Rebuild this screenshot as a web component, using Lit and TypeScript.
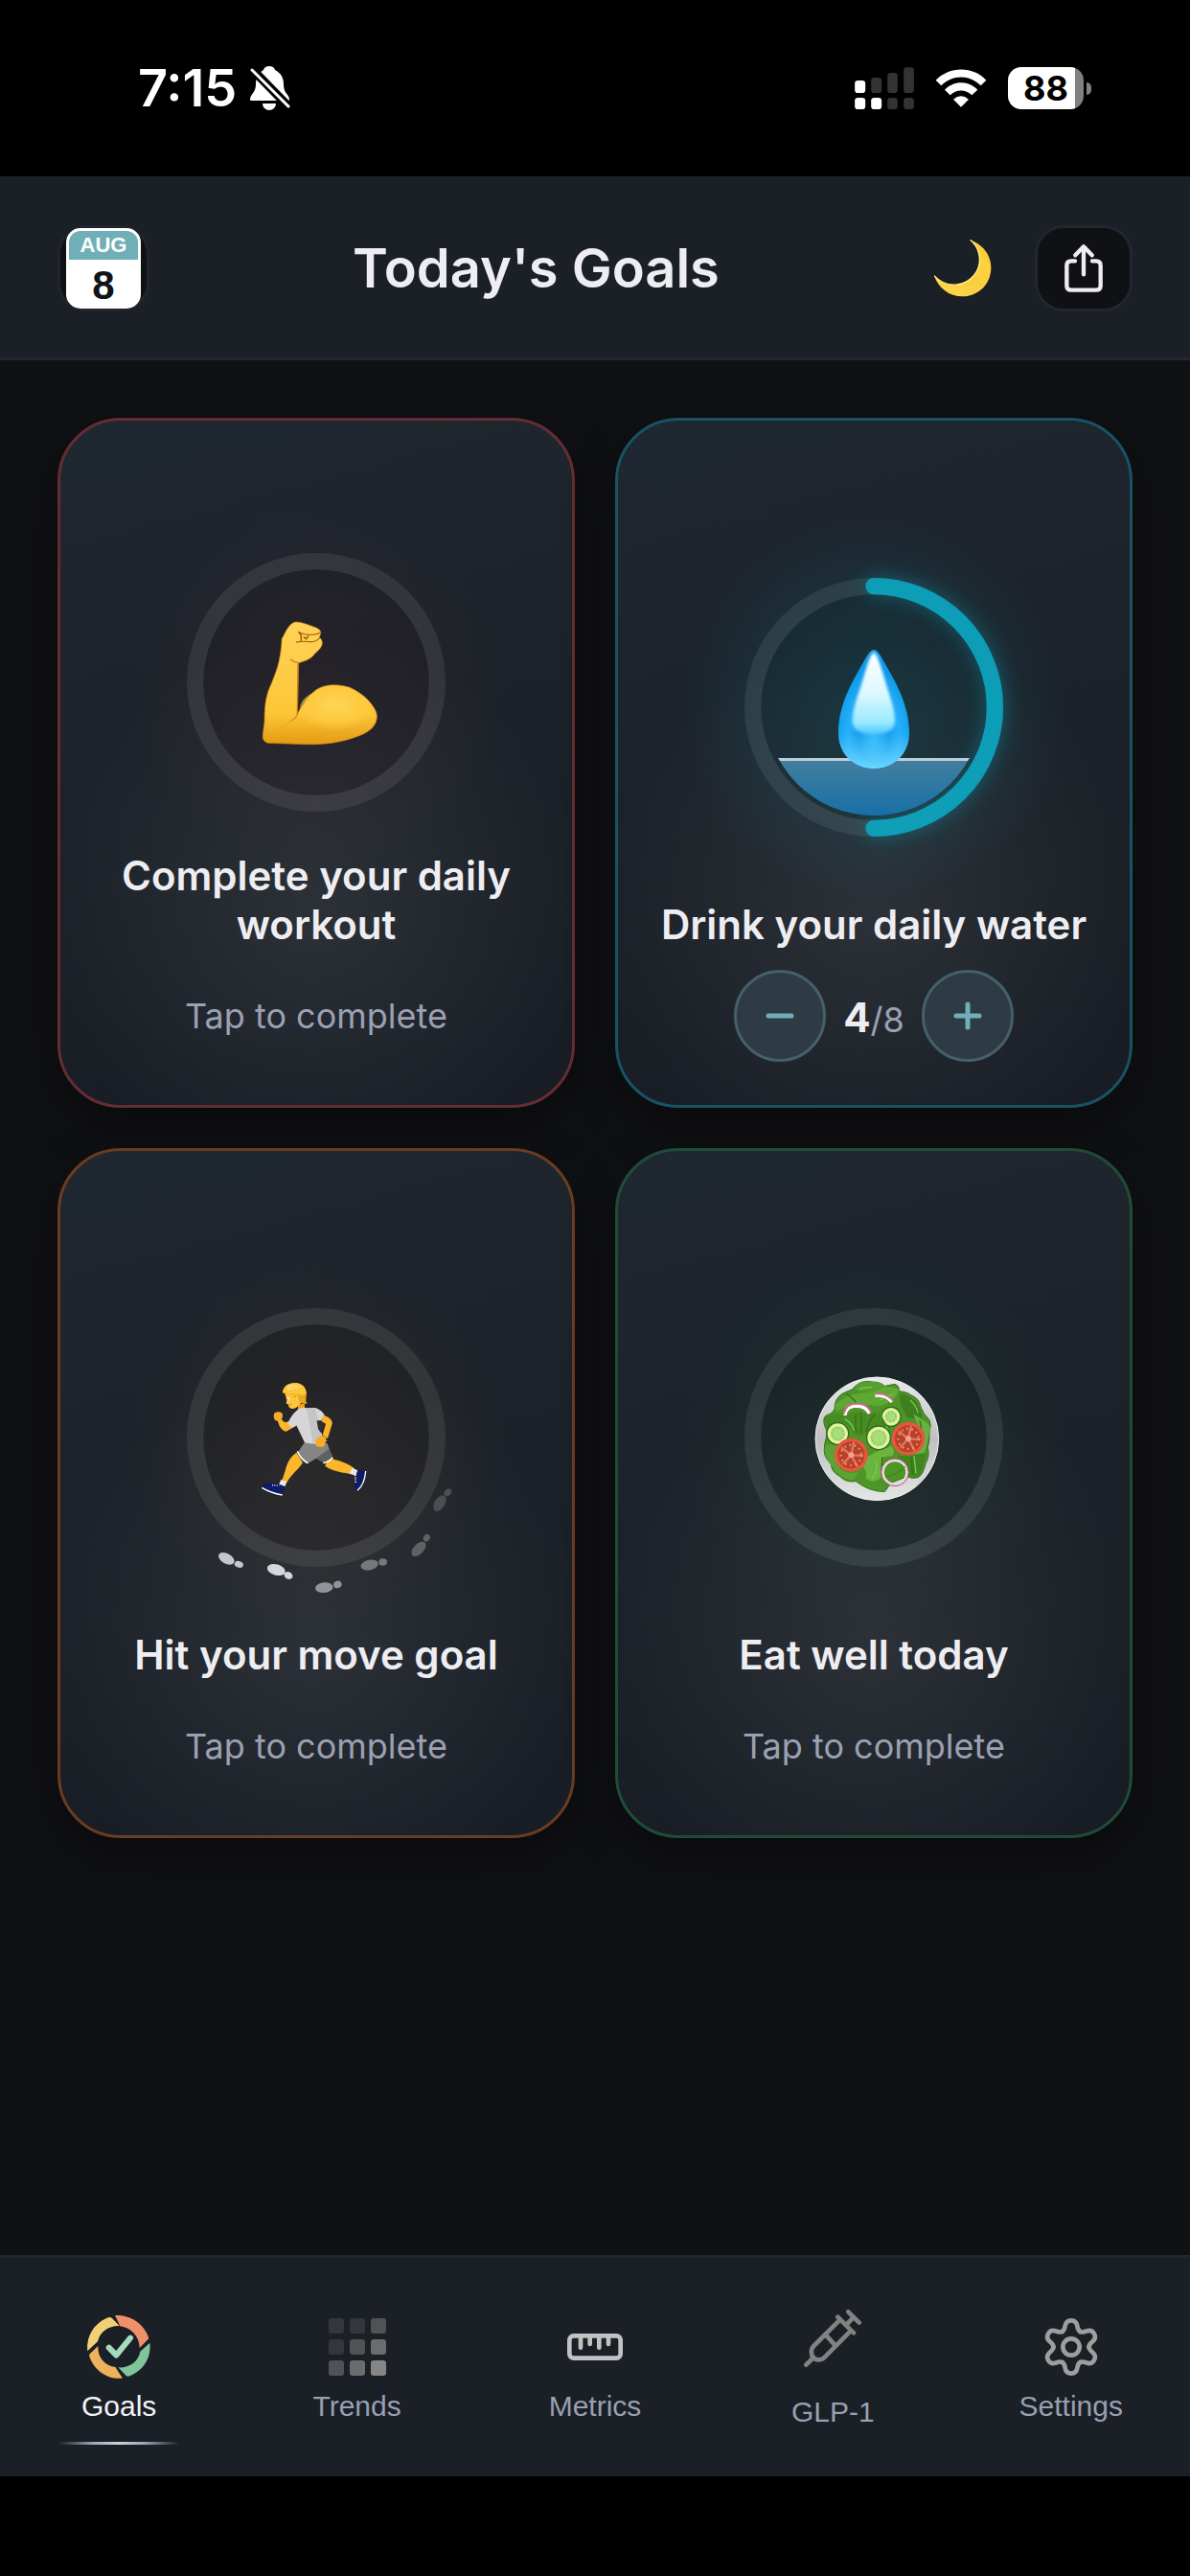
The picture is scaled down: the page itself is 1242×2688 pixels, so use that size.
import { LitElement, css, html, nothing, svg } from "lit";
import type { SVGTemplateResult, TemplateResult } from "lit";
import { customElement, state } from "lit/decorators.js";
import { classMap } from "lit/directives/class-map.js";

type Goal = {
  id: string;
  title: string;
  color: string;
  art: SVGTemplateResult;
};

type NavItem = {
  id: string;
  label: string;
  icon: TemplateResult;
};

const RING_RADIUS = 379;
const RING_LENGTH = 2 * Math.PI * RING_RADIUS;

const bicepsArt = svg`
  <defs>
    <linearGradient id="arm" x1="0" y1="0" x2="0" y2="1">
      <stop offset="0" stop-color="#ffd257" />
      <stop offset="0.75" stop-color="#fdc637" />
      <stop offset="1" stop-color="#e39a13" />
    </linearGradient>
    <radialGradient id="upper-arm" cx="0.5" cy="0.4" r="0.6">
      <stop offset="0" stop-color="#ffd556" />
      <stop offset="0.6" stop-color="#fdca40" />
      <stop offset="1" stop-color="#fdca40" stop-opacity="0" />
    </radialGradient>
  </defs>
  <g transform="translate(135 129)">
    <path
      d="M206 87C225 87 250 98 270 105Q286 112 284 122L280 136Q290 142 289 156C284 175 268 181 262 191C250 205 230 211 215 215L211 375C230 340 255 310 270 299C300 280 340 281 375 292C420 312 455 350 460 378C462 410 440 430 405 443C350 465 290 472 235 470L118 466Q100 460 103 440L108 400C108 340 115 310 130 280C145 240 156 220 162 150Q160 140 168 130C180 105 190 90 206 87Z"
      fill="url(#arm)" stroke="#c98512" stroke-width="2"
    />
    <ellipse cx="330" cy="360" rx="112" ry="66" fill="url(#upper-arm)" />
    <path d="M213 217L211 377Q206 390 186 399" fill="none" stroke="#c47a10" stroke-width="4" stroke-linecap="round" />
    <path d="M211 377C190 402 160 420 128 434" fill="none" stroke="#f0ae27" stroke-width="4" />
    <path d="M189 203Q200 214 216 214" fill="none" stroke="#d08c18" stroke-width="4" />
    <path d="M215 119Q232 128 252 127T281 121M281 137Q268 151 248 149T208 150" fill="none" stroke="#b06f10" stroke-width="4" stroke-linecap="round" />
    <path d="M217 120Q227 132 222 146M232 134L239 140L245 132" fill="none" stroke="#8e5208" stroke-width="4" stroke-linecap="round" />
  </g>
`;

const runnerArt = svg`
  <g transform="translate(-45 -78)">
    <path d="M486 548L478 572C500 590 535 592 562 598L570 580C545 560 520 556 498 550Z" fill="#fbb62a" />
    <path d="M388 530C362 548 358 570 352 590L342 620L358 624C372 598 398 580 408 562Z" fill="#fbb62a" />
    <path d="M388 412L368 432L352 436L338 424L330 432C334 450 345 464 356 464L388 446Z" fill="#fbb62a" />
    <path d="M318 410C318 402 334 400 342 406C348 414 344 426 338 430C328 434 314 430 318 410Z" fill="#f9ac25" />
    <path d="M392 380L394 400L414 396L414 376Z" fill="#f0a020" />
    <path d="M350 338L358 366L356 377L362 379L365 388C370 394 378 394 388 389L402 376L404 336Z" fill="#ffc53a" />
    <path d="M345 344C346 322 364 312 384 312C408 313 421 330 419 350L418 370L422 378L398 374L390 346L384 362L378 348Q360 352 350 343Z" fill="#e9a823" />
    <path d="M345 344C346 322 364 312 384 312C408 313 421 330 419 348Q400 352 390 346L384 350L378 346Q360 350 350 343Z" fill="#fdc73c" />
    <path d="M358 322Q380 310 404 326Q385 330 362 336Z" fill="#ffd766" />
    <ellipse cx="363" cy="363" rx="4" ry="5" fill="#ffffff" />
    <circle cx="362" cy="364" r="2" fill="#4b78b4" />
    <path d="M366 381L373 378" stroke="#9c5a10" stroke-width="2" />
    <path d="M414 498L396 524L392 534L424 564L450 548L474 562L502 546L484 500Z" fill="#858585" />
    <path d="M450 548L474 562L502 546L490 518Z" fill="#616161" />
    <path d="M391 526C398 542 410 556 424 563M472 563Q490 560 502 546" fill="none" stroke="#ffffff" stroke-width="5" />
    <path d="M388 400C398 389 412 388 420 391L446 390C462 394 474 406 476 414L466 430L452 430L470 480L484 494Q450 508 414 499L388 445L372 452L361 438C370 420 378 408 388 400Z" fill="#d6d6d8" />
    <path d="M420 392L446 390L454 420L470 480L440 500Z" fill="#c5c5c8" />
    <path d="M474 414L466 432L480 440L470 476L486 486L500 440C502 428 488 418 474 414Z" fill="#fbb428" />
    <path d="M466 478C452 482 446 494 448 506Q456 516 474 511C480 502 480 488 482 482Z" fill="#f9ac25" />
    <path d="M452 430L456 456L466 470L474 444L464 432Z" fill="#322c2b" />
    <path d="M340 615L358 622L352 637L332 633Z" fill="#e8e8e8" />
    <path d="M562 578L580 586L574 602L554 596Z" fill="#e8e8e8" />
    <path d="M282 630Q300 624 330 628L354 637L344 664Q310 662 280 642Z" fill="#101b66" />
    <path d="M280 640Q306 656 344 663" fill="none" stroke="#ffffff" stroke-width="4" />
    <path d="M312 632L334 634" stroke="#ffffff" stroke-width="4" stroke-dasharray="3 4" />
    <path d="M580 584L606 588Q604 630 580 650L570 646Q568 620 576 604Z" fill="#101b66" />
    <path d="M605 588Q602 630 579 649" fill="none" stroke="#ffffff" stroke-width="4" />
    <path d="M572 600L574 626" stroke="#ffffff" stroke-width="5" stroke-dasharray="3 4" />
    <g fill="#c6c7cd">
      <ellipse cx="169" cy="862" rx="27" ry="16" transform="rotate(30 169 862)" />
      <ellipse cx="208" cy="880" rx="14" ry="10" transform="rotate(18 208 880)" />
    </g>
    <g fill="#d6d7dc">
      <ellipse cx="325" cy="897" rx="29" ry="17" transform="rotate(16 325 897)" />
      <ellipse cx="363" cy="915" rx="14" ry="11" transform="rotate(28 363 915)" />
    </g>
    <g fill="#929398">
      <ellipse cx="475" cy="953" rx="28" ry="16" transform="rotate(-6 475 953)" />
      <ellipse cx="517" cy="943" rx="13" ry="11" transform="rotate(-14 517 943)" />
    </g>
    <g fill="#77787c">
      <ellipse cx="617" cy="882" rx="28" ry="16" transform="rotate(-12 617 882)" />
      <ellipse cx="659" cy="873" rx="13" ry="11" />
    </g>
    <g fill="#606165">
      <ellipse cx="771" cy="832" rx="28" ry="16" transform="rotate(-46 771 832)" />
      <ellipse cx="796" cy="797" rx="12" ry="10" transform="rotate(-60 796 797)" />
    </g>
    <g fill="#4c4e52">
      <ellipse cx="837" cy="689" rx="28" ry="16" transform="rotate(-58 837 689)" />
      <ellipse cx="862" cy="655" rx="13" ry="10" transform="rotate(-48 862 655)" />
    </g>
  </g>
`;

const tomato = (x: number, y: number) => svg`
  <g transform="translate(${x} ${y})">
    <circle r="52" fill="#e9553f" />
    <circle r="42" fill="#b8402f" />
    <path d="M0 0L-28 -22M0 0L8 -38M0 0L36 2M0 0L18 34M0 0L-24 26" stroke="#e2765c" stroke-width="7" stroke-linecap="round" />
    <circle r="32" fill="none" stroke="#e3ad4c" stroke-width="6" stroke-dasharray="5 11" />
    <circle r="9" fill="#f5a184" />
  </g>
`;

const cucumber = (x: number, y: number, r: number) => svg`
  <circle cx=${x} cy=${y} r=${r} fill="#2f6a1c" />
  <circle cx=${x} cy=${y} r=${r - 4} fill="#e3f3a0" />
  <circle cx=${x} cy=${y} r=${r - 13} fill="#a9dd77" />
  <circle cx=${x} cy=${y} r=${r - 18} fill="none" stroke="#7dc05a" stroke-width="4" stroke-dasharray="4 7" />
`;

const saladArt = svg`
  <defs>
    <linearGradient id="plate" x1="0" y1="0" x2="0" y2="1">
      <stop offset="0" stop-color="#e9e9eb" />
      <stop offset="0.5" stop-color="#bfc1c1" />
      <stop offset="1" stop-color="#e4e5e5" />
    </linearGradient>
  </defs>
  <g transform="translate(-81 -78)">
    <circle cx="496" cy="487" r="193" fill="url(#plate)" stroke="#f2f2f3" stroke-width="3" />
    <path
      d="M428 322Q450 302 480 309Q505 308 520 322L552 316Q568 322 564 338Q590 340 602 350Q630 362 632 385Q640 410 660 428Q668 445 660 465Q662 490 655 515Q662 540 648 565Q640 600 625 608Q605 614 590 605L540 625L520 653Q470 652 430 620Q400 625 380 605Q352 590 352 565Q325 545 332 505Q340 480 338 460Q322 430 335 415Q368 405 364 380Q370 350 400 340Q420 335 428 322Z"
      fill="#4e9427" stroke="#3b6f1f" stroke-width="3"
    />
    <path d="M364 380Q400 350 440 345Q500 340 520 322L564 330Q560 370 500 385Q430 370 370 402Z" fill="#5fa834" />
    <path d="M428 322Q450 302 480 309Q505 308 520 322Q480 345 428 336Z" fill="#579f30" />
    <path d="M332 420Q370 400 400 415Q430 395 450 408Q500 398 530 420Q545 450 535 480L470 470Q430 490 415 460L400 440Q360 445 338 455Z" fill="#478c23" />
    <path d="M566 345Q600 350 618 370Q640 400 636 430L590 420L570 380Z" fill="#3f7f20" />
    <path d="M610 410Q650 430 664 450Q655 500 640 545L600 530L640 490Z" fill="#67b043" />
    <path d="M333 510Q350 500 370 510L380 580Q400 600 438 590L420 618Q380 612 356 575Q328 545 333 510Z" fill="#5aa334" />
    <path d="M440 560Q480 530 540 510Q555 520 545 540L510 545L508 610Q480 630 460 610Q470 590 440 560Z" fill="#6bb53f" />
    <path d="M430 612Q480 640 518 630L520 653Q470 650 430 612Z" fill="#4a9a26" />
    <path d="M560 540Q600 540 650 530Q640 580 630 602Q600 610 592 598Z" fill="#3f8620" />
    <path d="M430 410Q425 440 432 468M445 402Q450 440 445 470M490 408Q470 430 462 465M512 545L510 600M603 545L608 600M630 500Q640 470 630 430M400 345Q420 360 430 372" fill="none" stroke="#33701a" stroke-width="4" />
    <path d="M395 425Q420 440 424 462M550 345L505 365M520 420Q530 445 525 465M480 612Q495 600 496 560M612 540L618 595M600 366Q620 385 624 405M480 325L440 330" fill="none" stroke="#7cc655" stroke-width="4" />
    <path d="M396 414Q398 384 434 384Q462 386 472 408" fill="none" stroke="#ffffff" stroke-width="10" />
    <path d="M392 410Q398 377 434 377Q468 378 477 404" fill="none" stroke="#d7659c" stroke-width="5" />
    <path d="M490 352Q522 346 543 372" fill="none" stroke="#ffffff" stroke-width="10" />
    <path d="M490 347Q526 342 547 370" fill="none" stroke="#d7659c" stroke-width="5" />
    ${cucumber(540, 418, 32)}
    <path d="M500 420Q520 400 516 388L508 400Q512 430 536 450Z" fill="#478c23" />
    ${cucumber(373, 471, 36)}
    ${cucumber(501, 484, 39)}
    ${tomato(415, 538)}
    ${tomato(594, 487)}
    <circle cx="552" cy="592" r="38" fill="none" stroke="#dfe2da" stroke-width="9" />
    <circle cx="552" cy="592" r="43" fill="none" stroke="#b9487c" stroke-width="3" />
    <path d="M524 606Q560 600 584 574" fill="none" stroke="#3f8620" stroke-width="4" />
  </g>
`;

const DROP_PATH =
  "M405 225C416 225 426 242 440 268C470 322 516 395 516 486C516 552 466 597 405 597C344 597 294 552 294 486C294 395 340 322 370 268C384 242 394 225 405 225Z";

const waterArt = svg`
  <defs>
    <clipPath id="basin"><circle cx="405" cy="405" r="339" /></clipPath>
    <linearGradient id="water" x1="0" y1="0" x2="0" y2="1">
      <stop offset="0" stop-color="#447f9e" />
      <stop offset="0.72" stop-color="#1870a6" />
    </linearGradient>
    <radialGradient id="drop" cx="0.5" cy="0.75" r="0.6">
      <stop offset="0" stop-color="#31b9ff" />
      <stop offset="0.35" stop-color="#149feb" />
      <stop offset="0.6" stop-color="#26b0fb" />
      <stop offset="1" stop-color="#0d98e8" />
    </radialGradient>
    <linearGradient id="shine" x1="0" y1="0" x2="0" y2="1">
      <stop offset="0" stop-color="#ffffff" />
      <stop offset="0.5" stop-color="#dcf8ff" />
      <stop offset="0.85" stop-color="#98eaff" />
      <stop offset="1" stop-color="#4cc6ff" />
    </linearGradient>
    <linearGradient id="rim" x1="0" y1="0" x2="0" y2="1">
      <stop offset="0.7" stop-color="#6ad0ff" stop-opacity="0" />
      <stop offset="1" stop-color="#6ad8ff" />
    </linearGradient>
    <filter id="soft"><feGaussianBlur stdDeviation="4" /></filter>
  </defs>
  <g clip-path="url(#basin)">
    <rect x="0" y="564" width="810" height="246" fill="url(#water)" />
    <rect x="0" y="564" width="810" height="9" fill="#b9cfda" />
  </g>
  <path d=${DROP_PATH} fill="url(#drop)" />
  <path d=${DROP_PATH} fill="url(#rim)" />
  <path d="M405 234C414 236 422 262 434 300C450 360 471 405 471 448C471 480 440 490 405 490C368 490 338 480 338 448C338 405 360 360 376 300C388 262 396 236 405 234Z" fill="url(#shine)" filter="url(#soft)" />
`;

const GOALS: Goal[] = [
  { id: "workout", title: "Complete your daily workout", color: "#ef4444", art: bicepsArt },
  { id: "water", title: "Drink your daily water", color: "#06b6d4", art: waterArt },
  { id: "move", title: "Hit your move goal", color: "#f97316", art: runnerArt },
  { id: "food", title: "Eat well today", color: "#22c55e", art: saladArt },
];

const TREND_SHADES = [
  ["#33363d", "#33363d", "#515255"],
  ["#33363d", "#515255", "#6b6c6e"],
  ["#515255", "#6b6c6e", "#868686"],
];

const NAV: NavItem[] = [
  {
    id: "goals",
    label: "Goals",
    icon: html`
      <svg class="nav-icon" viewBox="30 33 198 198" aria-hidden="true">
        <path d="M117 33C166 30 207 60 222 101Q223 106 220 109L194 135C194 100 168 72 133 67Z" fill="#f0906a" />
        <path d="M226 119C232 165 205 208 160 224Q155 225 152 222L127 196C162 198 190 178 196 146Z" fill="#80c49b" />
        <path d="M141 230C92 235 52 205 37 162Q36 157 38 154L64 129C62 163 84 190 118 195Z" fill="#eeb15c" />
        <path d="M31 145C26 98 53 55 98 39Q103 38 107 41L131 66C97 65 70 84 63 115Z" fill="#f3d074" />
        <path d="M98 134L121 158L165 104" fill="none" stroke="#a6dabf" stroke-width="18" stroke-linecap="round" stroke-linejoin="round" />
      </svg>
    `,
  },
  {
    id: "trends",
    label: "Trends",
    icon: html`
      <svg class="nav-icon" viewBox="-3 -3 66 66" aria-hidden="true">
        ${TREND_SHADES.map((row, y) =>
          row.map((fill, x) => svg`<rect x=${x * 22} y=${y * 22} width="16" height="16" rx="3" fill=${fill} />`),
        )}
      </svg>
    `,
  },
  {
    id: "metrics",
    label: "Metrics",
    icon: html`
      <svg class="nav-icon" viewBox="24 48 198 198" aria-hidden="true">
        <g fill="none" stroke="#c2c2c2" stroke-width="14" stroke-linecap="round">
          <rect x="43" y="112" width="160" height="70" rx="13" />
          <path d="M78 114V149M107 114V138M136 114V149M165 114V138" />
        </g>
      </svg>
    `,
  },
  {
    id: "glp",
    label: "GLP-1",
    icon: html`
      <svg class="nav-icon tall" viewBox="771 30 198 234" aria-hidden="true">
        <g fill="none" stroke="#828282" stroke-width="14" stroke-linecap="round" stroke-linejoin="round">
          <path d="M919 37L953 71M936 54L912 78M886 53L936 103M787 203L810 180M849 110L876 140" />
          <path d="M893 62L811 144C802 153 802 164 806 176C814 190 834 190 843 181L926 97" />
        </g>
      </svg>
    `,
  },
  {
    id: "settings",
    label: "Settings",
    icon: html`
      <svg class="nav-icon" viewBox="-99 -99 198 198" aria-hidden="true">
        <g fill="none" stroke="#9e9e9e" stroke-width="14" stroke-linecap="round">
          <circle r="26" />
          ${[0, 60, 120, 180, 240, 300].map(
            (angle) => svg`<path
              transform="rotate(${angle})"
              d="M-28 -48C-22 -52 -20 -58 -19 -66Q-16 -83 0 -83Q16 -83 19 -66C20 -58 22 -52 28 -48"
            />`,
          )}
        </g>
      </svg>
    `,
  },
];

@customElement("app-root")
export class AppRoot extends LitElement {
  static styles = css`
    :host {
      display: flex;
      flex-direction: column;
      min-height: 100vh;
      background: #000000;
      color: #eeeef2;
      font-family: Inter, "Liberation Sans", sans-serif;
    }

    button {
      margin: 0;
      padding: 0;
      border: 0;
      background: none;
      color: inherit;
      font: inherit;
      cursor: pointer;
    }

    svg {
      display: block;
    }

    .status {
      display: flex;
      align-items: center;
      justify-content: space-between;
      box-sizing: border-box;
      height: 184px;
      padding: 0 103px 0 144px;
      color: #ffffff;
    }

    .clock,
    .indicators {
      display: flex;
      align-items: center;
    }

    .clock {
      gap: 14px;
      font-size: 54px;
      font-weight: 600;
      line-height: 60px;
    }

    .indicators {
      gap: 22px;
    }

    .bell {
      width: 42px;
      height: 46px;
    }

    .signal {
      width: 62px;
      height: 44px;
    }

    .wifi {
      width: 54px;
      height: 40px;
    }

    .battery {
      display: flex;
      align-items: center;
      gap: 3px;
    }

    .battery-level {
      width: 79px;
      border-radius: 14px;
      background: linear-gradient(90deg, #ffffff 88%, #808080 88%);
      color: #000000;
      font-size: 36px;
      font-weight: 700;
      line-height: 44px;
      text-align: center;
    }

    .battery-tip {
      width: 5px;
      height: 13px;
      border-radius: 0 6px 6px 0;
      background: #808080;
    }

    .header {
      display: flex;
      align-items: center;
      justify-content: space-between;
      padding: 51px 60px 48px;
      border-bottom: 3px solid #22272f;
      background: #1b1f26;
    }

    .title {
      margin: 0;
      font-size: 56px;
      font-weight: 600;
      line-height: 68px;
    }

    .actions {
      display: flex;
      align-items: center;
      gap: 33px;
    }

    .date {
      display: flex;
      justify-content: center;
      width: 96px;
      border: 3px solid #20252c;
      border-radius: 30px;
      box-sizing: border-box;
      background: #101114;
    }

    .page {
      display: flex;
      flex-direction: column;
      width: 78px;
      height: 84px;
      box-sizing: border-box;
      padding: 3px;
      border-radius: 15px;
      background: #ffffff;
      font-family: "Liberation Sans", Arial, sans-serif;
      font-weight: 700;
      text-align: center;
    }

    .month {
      border-radius: 12px 12px 0 0;
      background: #71afb8;
      color: #ffffff;
      font-size: 22px;
      line-height: 30px;
    }

    .day {
      color: #101418;
      font-size: 42px;
      line-height: 54px;
    }

    .theme {
      display: flex;
      justify-content: center;
      width: 84px;
    }

    .moon {
      width: 60px;
      height: 60px;
    }

    .share {
      display: flex;
      align-items: center;
      justify-content: center;
      width: 102px;
      height: 90px;
      box-sizing: border-box;
      border: 3px solid #22272f;
      border-radius: 30px;
      background: #101114;
    }

    .share-icon {
      width: 40px;
      height: 50px;
    }

    .goals {
      display: grid;
      flex: 1;
      grid-template-columns: repeat(2, minmax(0, 1fr));
      align-content: start;
      gap: 42px;
      padding: 60px;
      background: #101114;
    }

    .card {
      display: flex;
      flex-direction: column;
      align-items: center;
      min-height: 720px;
      box-sizing: border-box;
      padding: 115px 30px 45px;
      border: 3px solid;
      border-radius: 66px;
      background:
        radial-gradient(circle at 50% 72%, rgba(255, 255, 255, 0.08), transparent 50%),
        linear-gradient(165deg, #1f2730 0%, #1c2229 45%, #181c24 100%);
      box-shadow: 0 18px 48px rgba(0, 0, 0, 0.4);
      text-align: center;
    }

    .workout {
      border-color: #662c33;
    }

    .water {
      border-color: #175364;
    }

    .move {
      border-color: #6a3c20;
    }

    .food {
      border-color: #1f4c37;
    }

    .ring-area {
      display: flex;
      flex: 1;
      align-items: center;
    }

    .ring {
      width: 270px;
      height: 270px;
      overflow: visible;
    }

    .arc {
      filter: drop-shadow(0 0 30px rgba(6, 182, 212, 0.5));
    }

    .card-title {
      margin: 18px 0 22px;
      font-size: 42px;
      font-weight: 600;
      line-height: 51px;
    }

    .card-foot {
      display: flex;
      align-items: center;
      gap: 18px;
      min-height: 96px;
      color: #9aa1b2;
      font-size: 36px;
      line-height: 44px;
    }

    .count {
      padding-top: 6px;
    }

    .count strong {
      color: #eeeef2;
      font-size: 42px;
      font-weight: 700;
    }

    .step {
      display: flex;
      align-items: center;
      justify-content: center;
      width: 96px;
      height: 96px;
      box-sizing: border-box;
      border: 3px solid #45606a;
      border-radius: 50%;
      background: #2e3b44;
    }

    .step-icon {
      width: 30px;
      height: 30px;
    }

    .nav {
      display: grid;
      grid-template-columns: repeat(5, minmax(0, 1fr));
      margin-bottom: 104px;
      padding: 54px 0 27px;
      border-top: 3px solid #22272f;
      background: #1b1f26;
    }

    .nav-item {
      display: flex;
      flex-direction: column;
      align-items: center;
      justify-content: center;
      color: #98a0b1;
      font-family: "Liberation Sans", Arial, sans-serif;
      font-size: 30px;
      line-height: 34px;
      text-decoration: none;
    }

    .nav-item.active {
      color: #f2f3f5;
    }

    .nav-icon {
      width: 66px;
      height: 66px;
      margin-bottom: 12px;
    }

    .nav-icon.tall {
      height: 78px;
    }

    .underline {
      width: 126px;
      height: 3px;
      margin-top: 20px;
    }

    .active .underline {
      background: linear-gradient(90deg, transparent, #9aa1b2 28%, #cdd2dd 50%, #9aa1b2 72%, transparent);
    }
  `;

  @state() private tab = "goals";
  @state() private cups = 4;
  @state() private done: string[] = [];

  private readonly cupGoal = 8;

  private changeCups(step: number) {
    this.cups = Math.min(this.cupGoal, Math.max(0, this.cups + step));
  }

  private toggle(id: string) {
    this.done = this.done.includes(id) ? this.done.filter((item) => item !== id) : [...this.done, id];
  }

  private progress(goal: Goal) {
    if (goal.id === "water") {
      return this.cups / this.cupGoal;
    }
    return this.done.includes(goal.id) ? 1 : 0;
  }

  private renderRing(goal: Goal) {
    const progress = this.progress(goal);
    const strength = progress > 0 ? 0.16 : 0.06;
    return html`
      <div class="ring-area">
        <svg class="ring" viewBox="0 0 810 810" aria-hidden="true">
          <defs>
            <radialGradient id="glow-${goal.id}">
              <stop offset="0" stop-color=${goal.color} stop-opacity=${strength} />
              <stop offset="0.6" stop-color=${goal.color} stop-opacity=${strength / 2} />
              <stop offset="1" stop-color=${goal.color} stop-opacity="0" />
            </radialGradient>
          </defs>
          <circle cx="405" cy="405" r="600" fill="url(#glow-${goal.id})" />
          <circle cx="405" cy="405" r="353" fill="#000000" fill-opacity="0.08" />
          <circle cx="405" cy="405" r=${RING_RADIUS} fill="none" stroke="#ffffff" stroke-opacity="0.08" stroke-width="52" />
          ${progress > 0
            ? svg`<circle
                class="arc"
                cx="405" cy="405" r=${RING_RADIUS}
                fill="none" stroke=${goal.color} stroke-opacity="0.74" stroke-width="52" stroke-linecap="round"
                stroke-dasharray="${RING_LENGTH * progress} ${RING_LENGTH}"
                transform="rotate(-90 405 405)"
              />`
            : nothing}
          ${goal.art}
        </svg>
      </div>
    `;
  }

  private renderGoal(goal: Goal) {
    if (goal.id === "water") {
      return html`
        <article class="card water">
          ${this.renderRing(goal)}
          <h2 class="card-title">${goal.title}</h2>
          <div class="card-foot">
            <button class="step" type="button" aria-label="Remove a glass" @click=${() => this.changeCups(-1)}>
              <svg class="step-icon" viewBox="0 0 30 30" aria-hidden="true">
                <path d="M3 15H27" stroke="#71afb8" stroke-width="5" stroke-linecap="round" />
              </svg>
            </button>
            <span class="count"><strong>${this.cups}</strong>/${this.cupGoal}</span>
            <button class="step" type="button" aria-label="Add a glass" @click=${() => this.changeCups(1)}>
              <svg class="step-icon" viewBox="0 0 30 30" aria-hidden="true">
                <path d="M3 15H27M15 3V27" stroke="#71afb8" stroke-width="5" stroke-linecap="round" />
              </svg>
            </button>
          </div>
        </article>
      `;
    }
    return html`
      <button class="card ${goal.id}" type="button" @click=${() => this.toggle(goal.id)}>
        ${this.renderRing(goal)}
        <span class="card-title">${goal.title}</span>
        <span class="card-foot">${this.done.includes(goal.id) ? "Completed" : "Tap to complete"}</span>
      </button>
    `;
  }

  private renderStatus() {
    return html`
      <div class="status">
        <div class="clock">
          <span>7:15</span>
          <svg class="bell" viewBox="0 0 42 46" aria-hidden="true">
            <path
              fill="#ffffff"
              d="M20 0c3 0 5 1 6 4 6 3 9 8 9 15 0 10 6 10 6 16q0 1-1 1H1q-1 0-1-1c0-6 6-7 6-16 0-7 3-12 8-15 1-3 3-4 6-4zM13 39h14a7 7 0 0 1-14 0z"
            />
            <path d="M1 2L41 43" stroke="#000000" stroke-width="9" />
            <path d="M2 4L40 42" stroke="#ffffff" stroke-width="3" stroke-linecap="round" />
          </svg>
        </div>
        <div class="indicators">
          <svg class="signal" viewBox="213 120 185 132" aria-hidden="true">
            <g fill="#ffffff">
              <rect x="213" y="162" width="33" height="39" rx="10" />
              <rect x="213" y="216" width="33" height="36" rx="10" />
              <rect x="264" y="216" width="33" height="36" rx="10" />
            </g>
            <g fill="#333333">
              <rect x="264" y="153" width="33" height="48" rx="10" />
              <rect x="315" y="138" width="32" height="63" rx="10" />
              <rect x="366" y="121" width="32" height="80" rx="10" />
              <rect x="315" y="216" width="32" height="36" rx="10" />
              <rect x="366" y="216" width="32" height="36" rx="10" />
            </g>
          </svg>
          <svg class="wifi" viewBox="466 125 162 120" aria-hidden="true">
            <path
              fill="#ffffff"
              d="M468 160C512 115 582 115 626 160L609 177C574 142 520 142 485 177ZM496 190C523 160 571 160 599 190L581 207C562 188 532 188 513 207ZM523 220Q547 200 571 220L547 244Z"
            />
          </svg>
          <div class="battery">
            <div class="battery-level">88</div>
            <div class="battery-tip"></div>
          </div>
        </div>
      </div>
    `;
  }

  private renderHeader() {
    return html`
      <header class="header">
        <button class="date" type="button" aria-label="Choose a date">
          <span class="page">
            <span class="month">AUG</span>
            <span class="day">8</span>
          </span>
        </button>
        <h1 class="title">Today's Goals</h1>
        <div class="actions">
          <button class="theme" type="button" aria-label="Switch theme">
            <svg class="moon" viewBox="466 655 180 180" aria-hidden="true">
              <defs>
                <linearGradient id="moonlight" x1="0" y1="1" x2="1" y2="0">
                  <stop offset="0" stop-color="#ffd84a" />
                  <stop offset="0.5" stop-color="#f9cf3e" />
                  <stop offset="0.75" stop-color="#ffd23c" />
                  <stop offset="1" stop-color="#f2c13a" />
                </linearGradient>
              </defs>
              <path
                fill="url(#moonlight)"
                d="M579 656C622 672 645 707 644 745C643 798 601 833 555 833C513 833 479 806 466 768C486 790 514 799 538 796C584 790 611 750 608 712C606 690 596 670 579 656Z"
              />
              <path d="M579 656C596 670 606 690 608 712C611 750 584 790 538 796C514 799 486 790 466 768" fill="none" stroke="#fff08a" stroke-width="4" />
            </svg>
          </button>
          <button class="share" type="button" aria-label="Share">
            <svg class="share-icon" viewBox="873 675 120 150" aria-hidden="true">
              <g fill="none" stroke="#eeeef2" stroke-width="13" stroke-linecap="round" stroke-linejoin="round">
                <path d="M906 727H894Q880 727 880 741V804Q880 818 894 818H972Q986 818 986 804V741Q986 727 972 727H960" />
                <path d="M933 769V684M907 709L933 682L959 709" />
              </g>
            </svg>
          </button>
        </div>
      </header>
    `;
  }

  render() {
    return html`
      ${this.renderStatus()} ${this.renderHeader()}
      <main class="goals">${GOALS.map((goal) => this.renderGoal(goal))}</main>
      <nav class="nav" aria-label="Main">
        ${NAV.map(
          (item) => html`
            <a
              class=${classMap({ "nav-item": true, active: item.id === this.tab })}
              href="#${item.id}"
              aria-current=${item.id === this.tab ? "page" : nothing}
              @click=${() => (this.tab = item.id)}
            >
              ${item.icon}
              <span>${item.label}</span>
              <span class="underline"></span>
            </a>
          `,
        )}
      </nav>
    `;
  }
}

declare global {
  interface HTMLElementTagNameMap {
    "app-root": AppRoot;
  }
}
